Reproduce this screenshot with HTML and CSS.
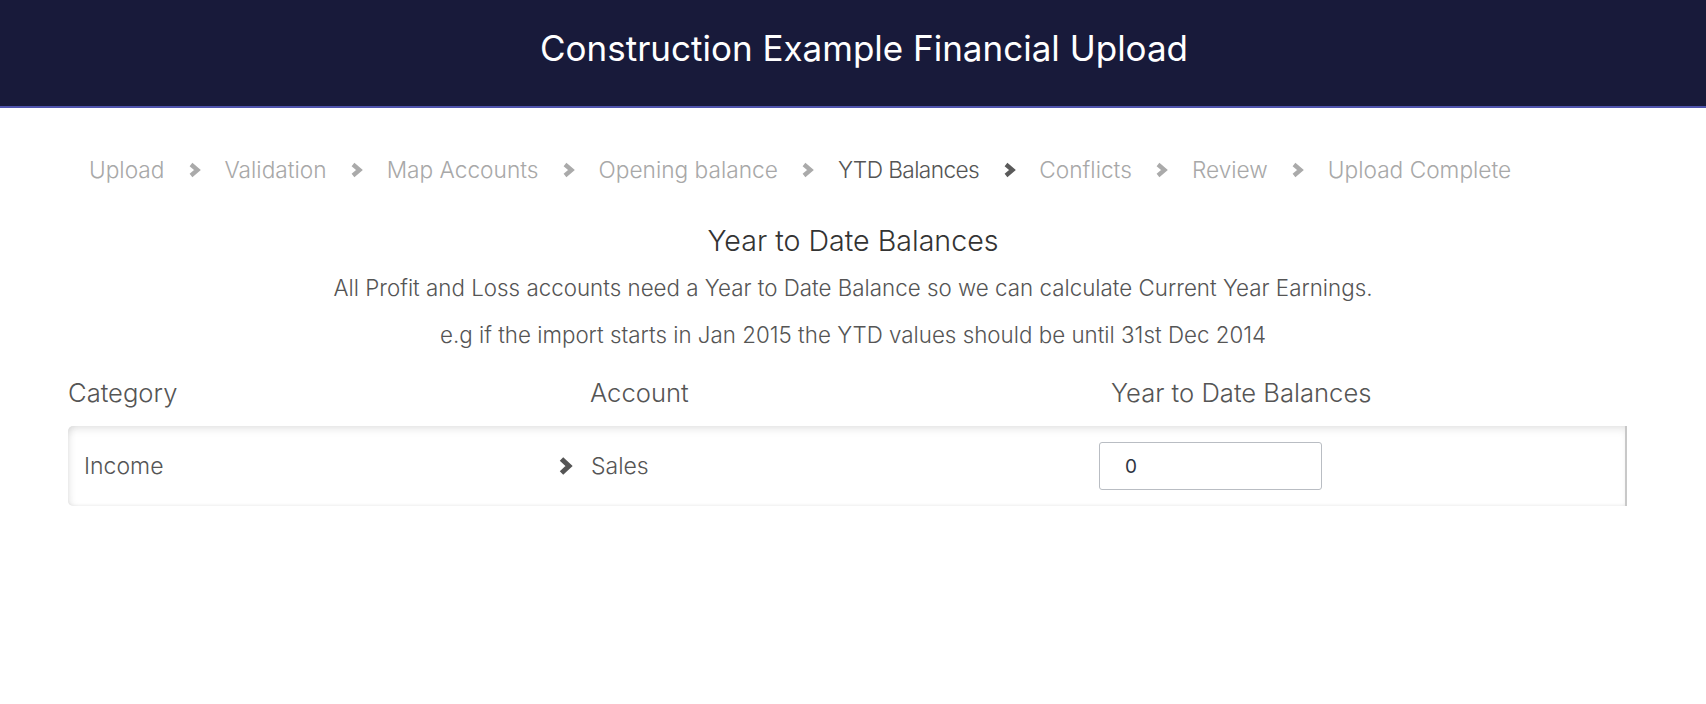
FILE: index.html
```html
<!DOCTYPE html>
<html>
<head>
<meta charset="utf-8">
<link rel="stylesheet" href="styles.css">
</head>
<body>
<header class="topbar">
  <h1 class="topbar-title">Construction Example Financial Upload</h1>
</header>

<nav class="steps">
  <span class="step">Upload</span>
  <svg class="chev" viewBox="0 0 13 16"><polyline points="3,2.5 9.5,8 3,13.5"/></svg>
  <span class="step">Validation</span>
  <svg class="chev" viewBox="0 0 13 16"><polyline points="3,2.5 9.5,8 3,13.5"/></svg>
  <span class="step">Map Accounts</span>
  <svg class="chev" viewBox="0 0 13 16"><polyline points="3,2.5 9.5,8 3,13.5"/></svg>
  <span class="step">Opening balance</span>
  <svg class="chev" viewBox="0 0 13 16"><polyline points="3,2.5 9.5,8 3,13.5"/></svg>
  <span class="step step-active">YTD Balances</span>
  <svg class="chev chev-active" viewBox="0 0 13 16"><polyline points="3,2.5 9.5,8 3,13.5"/></svg>
  <span class="step">Conflicts</span>
  <svg class="chev" viewBox="0 0 13 16"><polyline points="3,2.5 9.5,8 3,13.5"/></svg>
  <span class="step">Review</span>
  <svg class="chev" viewBox="0 0 13 16"><polyline points="3,2.5 9.5,8 3,13.5"/></svg>
  <span class="step">Upload Complete</span>
</nav>

<section class="intro">
  <h2 class="intro-title">Year to Date Balances</h2>
  <p class="intro-text">All Profit and Loss accounts need a Year to Date Balance so we can calculate Current Year Earnings.</p>
  <p class="intro-text intro-example">e.g if the import starts in Jan 2015 the YTD values should be until 31st Dec 2014</p>
</section>

<section class="table">
  <div class="table-head">
    <div class="th">Category</div>
    <div class="th th-account">Account</div>
    <div class="th th-ytd">Year to Date Balances</div>
  </div>
  <div class="table-row">
    <div class="td td-category">
      <span>Income</span>
      <svg class="row-chev" viewBox="0 0 16 20"><polyline points="3.5,3 11,10 3.5,17"/></svg>
    </div>
    <div class="td td-account">Sales</div>
    <div class="td td-ytd"><input class="ytd-input" type="text" value="0"></div>
  </div>
</section>
</body>
</html>
```

FILE: styles.css
```css
* { box-sizing: border-box; }

body {
  margin: 0;
  background: #ffffff;
  font-family: "Inter", "Lato", sans-serif;
  font-weight: 300;
  color: #555555;
}

.topbar {
  height: 108px;
  background: #181a3a;
  border-bottom: 2px solid #4f54ad;
  display: flex;
  align-items: center;
  justify-content: center;
  padding: 0 0 10px 22px;
}

.topbar-title {
  margin: 0;
  font-weight: 400;
  font-size: 35px;
  color: #ffffff;
}

.steps {
  display: flex;
  align-items: center;
  gap: 23.5px;
  margin: 47px 0 0 89px;
  height: 30px;
}

.step {
  font-size: 22.7px;
  color: #a8a8a8;
  line-height: 30px;
}

.step-active {
  color: #555555;
  letter-spacing: -0.6px;
}

.chev {
  width: 13px;
  height: 16px;
  fill: none;
  stroke: #aaaaaa;
  stroke-width: 4.3;
  stroke-linejoin: miter;
}

.chev-active { stroke: #5a5a5a; }

.intro {
  text-align: center;
  margin-top: 38px;
}

.intro-title {
  margin: 0;
  font-weight: 300;
  font-size: 28.6px;
  line-height: 36px;
  color: #333333;
}

.intro-text {
  margin: 14px 0 0;
  font-size: 22.35px;
  line-height: 30px;
  color: #555555;
}

.intro-example { margin-top: 17px; }

.table {
  margin: 28px 79px 0 68px;
}

.table-head {
  display: grid;
  grid-template-columns: 522px 521px 1fr;
  height: 30px;
  align-items: center;
}

.th {
  font-size: 25.6px;
  line-height: 30px;
  color: #555555;
}

.table-row {
  margin-top: 18px;
  height: 80px;
  display: grid;
  grid-template-columns: 506px 508px 1fr;
  align-items: center;
  padding-left: 16px;
  border-radius: 5px 0 0 5px;
  border-right: 2px solid #c8c8c8;
  box-shadow: inset 0 6px 9px -3px rgba(0,0,0,0.10), inset 5px 0 7px -3px rgba(0,0,0,0.08), inset 0 -2px 3px -1px rgba(0,0,0,0.05);
  background: #ffffff;
}

.td {
  font-size: 23px;
  color: #555555;
}

.td-category {
  display: flex;
  align-items: center;
  justify-content: space-between;
  padding-right: 16px;
}

.row-chev {
  width: 16px;
  height: 20px;
  fill: none;
  stroke: #555555;
  stroke-width: 5;
  stroke-linejoin: miter;
}

.td-account { padding-left: 1px; }

.ytd-input {
  width: 223px;
  height: 48px;
  border: 1.5px solid #b9bdc3;
  border-radius: 3px;
  padding: 0 0 0 25px;
  font-family: "Inter", sans-serif;
  font-weight: 400;
  font-size: 19px;
  color: #2f3442;
  background: #ffffff;
  outline: none;
  margin-left: 1px;
}
```
